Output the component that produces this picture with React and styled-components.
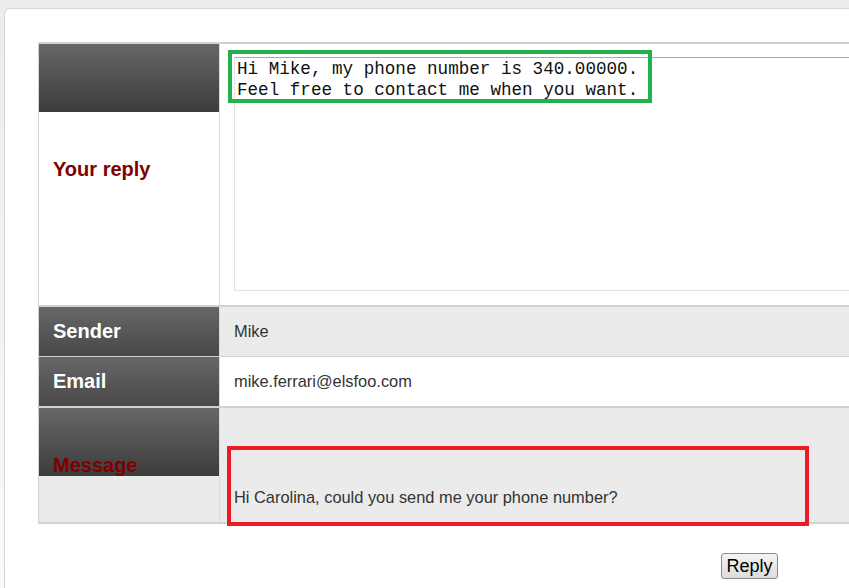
import React from 'react';
import styled, { createGlobalStyle } from 'styled-components';

const GlobalStyle = createGlobalStyle`
  html, body {
    margin: 0;
    padding: 0;
    height: 100%;
    overflow: hidden;
  }
  body {
    background: linear-gradient(to bottom, #ececec 0%, #f3f3f3 60%, #fafafa 100%);
    font-family: "Liberation Sans", Arial, sans-serif;
  }
`;

const rows = [
  { label: 'Sender', value: 'Mike', shade: true, dividerTop: 2 },
  { label: 'Email', value: 'mike.ferrari@elsfoo.com', shade: false, dividerTop: 1 },
];

const App = () => {
  return <Page>
    <GlobalStyle />
    <Panel>
      <FormTable>
        <Row>
          <Label $shade={false} $accent $lift>Your reply</Label>
          <Value $shade={false} $top>
            <ReplyBox
              defaultValue={'Hi Mike, my phone number is 340.00000.\nFeel free to contact me when you want.'}
            />
          </Value>
        </Row>
        {rows.map(r => (
          <Row key={r.label} $divider={r.dividerTop}>
            <Label $shade={r.shade}>{r.label}</Label>
            <Value $shade={r.shade}>{r.value}</Value>
          </Row>
        ))}
        <Row $divider={2} $tall>
          <Label $shade $accent>Message</Label>
          <Value $shade $bottom>Hi Carolina, could you send me your phone number?</Value>
        </Row>
      </FormTable>
      <ButtonRow>
        <ReplyButton type="button">Reply</ReplyButton>
      </ButtonRow>
    </Panel>
    <Mark $color="#22b14c" style={{ left: 228, top: 50, width: 424, height: 53 }} />
    <Mark $color="#ed1c24" style={{ left: 227, top: 446, width: 582, height: 80 }} />
  </Page>
}

export default App;

const Page = styled.div`
  position: relative;
  height: 588px;
  padding: 8px 0 0 4px;
  box-sizing: border-box;
  overflow: hidden;
`;

const Panel = styled.div`
  background: #fff;
  border: 1px solid #d6d6d6;
  border-right: none;
  border-bottom: none;
  border-top-left-radius: 6px;
  height: 100%;
  padding: 33px 0 0 33px;
  box-sizing: border-box;
  overflow: hidden;
`;

const FormTable = styled.div`
  width: 900px;
  display: flex;
  flex-direction: column;
  border-top: 2px solid #d2d2d2;
  border-left: 1px solid #d2d2d2;
  border-bottom: 2px solid #d2d2d2;
`;

const Row = styled.div`
  display: grid;
  grid-template-columns: 181px 1fr;
  height: ${p => p.$tall ? '114px' : p.$divider ? '49px' : '261px'};
  border-top: ${p => p.$divider ? `${p.$divider}px solid #d2d2d2` : 'none'};
`;

const Label = styled.div`
  display: flex;
  align-items: center;
  padding: ${p => p.$lift ? '0 0 10px 14px' : '0 0 0 14px'};
  border-right: 1px solid #dadada;
  font-size: 20px;
  font-weight: 700;
  color: ${p => p.$accent ? '#800000' : '#fff'};
  background: linear-gradient(to bottom, #676767, #3c3c3c) no-repeat top / 100% 68px;
  background-color: ${p => p.$shade ? '#ebebeb' : '#fff'};
`;

const Value = styled.div`
  display: flex;
  align-items: ${p => p.$top ? 'flex-start' : p.$bottom ? 'flex-end' : 'center'};
  padding: ${p => p.$top ? '13px 0 0 14px' : p.$bottom ? '0 0 15px 14px' : '0 0 0 14px'};
  font-size: 16.4px;
  color: #333;
  background: ${p => p.$shade ? '#ebebeb' : '#fff'};
`;

const ReplyBox = styled.textarea`
  width: 100%;
  height: 234px;
  box-sizing: border-box;
  margin: 0;
  padding: 1px 2px;
  resize: none;
  outline: none;
  border: 1px solid #e2e2e2;
  border-top-color: #a8a8a8;
  font-family: "Liberation Mono", "Courier New", monospace;
  font-size: 17.6px;
  line-height: 21px;
  color: #111;
  background: #fff;
`;

const ButtonRow = styled.div`
  display: flex;
  padding: 29px 0 0 683px;
`;

const ReplyButton = styled.button`
  width: 57px;
  height: 26px;
  padding: 0;
  border: 1px solid #8a8a8a;
  border-radius: 3px;
  background: linear-gradient(to bottom, #f4f4f4, #dcdcdc);
  font-family: "Liberation Sans", Arial, sans-serif;
  font-size: 18px;
  color: #000;
`;

const Mark = styled.div`
  position: absolute;
  box-sizing: border-box;
  border: 4px solid ${p => p.$color};
  pointer-events: none;
`;
